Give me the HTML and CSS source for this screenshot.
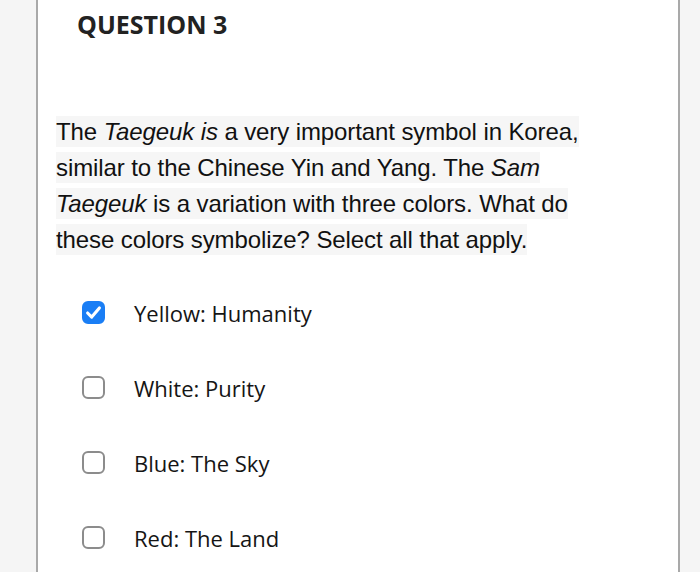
FILE: index.html
```html
<!DOCTYPE html>
<html>
<head>
<meta charset="utf-8">
<link rel="stylesheet" href="styles.css">
</head>
<body>
<div class="page">
  <div class="gutter"></div>
  <main class="card">
    <h1 class="title">QUESTION 3</h1>
    <p class="question"><span class="hl">The <em>Taegeuk is</em> a very important symbol in Korea, similar to the Chinese Yin and Yang. The <em>Sam Taegeuk</em> is a variation with three colors. What do these colors symbolize? Select all that apply.</span></p>
    <ul class="options">
      <li class="option"><span class="box checked"><svg viewBox="0 0 23 23" width="23" height="23"><path d="M5.6 12 L9.7 16.1 L17.4 6.9" fill="none" stroke="#fff" stroke-width="3.1" stroke-linecap="round" stroke-linejoin="round"/></svg></span><span class="label">Yellow: Humanity</span></li>
      <li class="option"><span class="box"></span><span class="label">White: Purity</span></li>
      <li class="option"><span class="box"></span><span class="label">Blue: The Sky</span></li>
      <li class="option"><span class="box"></span><span class="label">Red: The Land</span></li>
    </ul>
  </main>
  <div class="gutter right"></div>
</div>
</body>
</html>
```
FILE: styles.css
```css
html, body {
  margin: 0;
  padding: 0;
  height: 100%;
}
body {
  background: #f5f5f5;
}
.page {
  display: flex;
  height: 572px;
  overflow: hidden;
}
.gutter {
  width: 36px;
  flex: none;
  background: #f5f5f5;
}
.gutter.right {
  flex: 1;
}
.card {
  width: 622px;
  flex: none;
  background: #fff;
  border-left: 2px solid #a9a9a9;
  border-right: 2px solid #a9a9a9;
  padding: 0 0 0 18px;
}
.title {
  margin: 4px 0 0 21px;
  font-family: "Open Sans", sans-serif;
  font-weight: 700;
  font-size: 25px;
  line-height: 40px;
  color: #222;
}
.question {
  margin: 70px 0 0 0;
  font-family: "Liberation Sans", Arial, sans-serif;
  font-size: 24px;
  line-height: 36px;
  color: #111;
  width: 538px;
  letter-spacing: -0.1px;
}
.hl {
  background: #f6f6f6;
  padding: 2px 0;
}
.question em {
  font-style: italic;
}
.options {
  list-style: none;
  margin: 17px 0 0 0;
  padding: 0 0 0 26px;
}
.option {
  display: flex;
  align-items: center;
  gap: 29px;
  height: 75px;
  font-family: "Open Sans", sans-serif;
  font-size: 22px;
  color: #151515;
}
.box {
  width: 23px;
  height: 23px;
  box-sizing: border-box;
  border: 2px solid #8c8c8c;
  border-radius: 6px;
  flex: none;
  display: flex;
}
.box.checked {
  background: #1a7ef5;
  border-color: #1a7ef5;
}
.box.checked svg {
  margin: -2px;
}
```
